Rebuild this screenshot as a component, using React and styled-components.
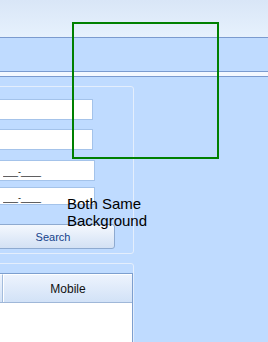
import React from "react";
import styled, { createGlobalStyle } from "styled-components";

const GlobalStyle = createGlobalStyle`
  html, body {
    margin: 0;
    padding: 0;
    background: #bfdbff;
    overflow: hidden;
  }
`;

const Page = styled.div`
  position: relative;
  width: 268px;
  height: 342px;
  overflow: hidden;
  background: #bfdbff;
  font-family: "Liberation Sans", Arial, sans-serif;
`;

const TopBar = styled.div`
  height: 37px;
  background: linear-gradient(#d9e6f7, #e6f1fd);
  border-bottom: 1px solid #7b9bcf;
`;

const Ribbon = styled.div`
  height: ${(p) => p.h}px;
  background: ${(p) => p.bg};
  border-bottom: 1px solid #7b9bcf;
`;

const Content = styled.div`
  display: flex;
  flex-direction: column;
  gap: 9px;
  width: 146px;
  margin: 9px 0 0 -12px;
`;

const Panel = styled.div`
  box-sizing: border-box;
  display: flex;
  flex-direction: column;
  align-items: flex-start;
  border: 1px solid #e4eefc;
  border-radius: 0 3px 3px 0;
  padding: ${(p) => p.pad};
  height: ${(p) => p.h}px;
`;

const Field = styled.input`
  box-sizing: border-box;
  width: ${(p) => p.w}px;
  height: ${(p) => p.h}px;
  margin: ${(p) => p.top}px 0 0 10px;
  padding: 3px 0 0 3px;
  border: 1px solid #a4c3ea;
  background: #fff;
  font-family: "Liberation Sans", Arial, sans-serif;
  font-size: 9px;
  color: #000;
  outline: none;
`;

const SearchButton = styled.button`
  box-sizing: border-box;
  width: 124px;
  height: 25px;
  margin: 19px 0 0 2px;
  border: 1px solid #8eaad0;
  border-radius: 3px;
  background: linear-gradient(#f4f8fe, #d3e1f4);
  color: #15428b;
  font-family: "Liberation Sans", Arial, sans-serif;
  font-size: 11px;
  padding: 0;
`;

const Grid = styled.div`
  box-sizing: border-box;
  width: 100%;
  flex: 1;
  border: 1px solid #7d9fcf;
  border-left: none;
  background: #fff;
`;

const HeaderRow = styled.div`
  display: flex;
  height: 28px;
  border-bottom: 1px solid #9fb7d8;
`;

const HeaderCell = styled.div`
  box-sizing: border-box;
  width: ${(p) => (p.w ? `${p.w}px` : "auto")};
  flex: ${(p) => (p.w ? "none" : 1)};
  display: flex;
  align-items: center;
  justify-content: center;
  border-right: ${(p) => (p.w ? "1px solid #a3bcdc" : "none")};
  border-top: 1px solid #fff;
  border-left: ${(p) => (p.w ? "none" : "1px solid #fff")};
  background: linear-gradient(#edf3fd, #d2e2f7);
  color: #111;
  font-size: 12px;
`;

const Note = styled.div`
  position: absolute;
  left: 67px;
  top: 195px;
  font-family: "Liberation Sans", Arial, sans-serif;
  font-size: 15px;
  line-height: 17px;
  color: #000;
`;

const Frame = styled.div`
  position: absolute;
  left: 72px;
  top: 22px;
  width: 147px;
  height: 137px;
  box-sizing: border-box;
  border: 2px solid #008000;
`;

export default function App() {
  return (
    <Page>
      <GlobalStyle />
      <TopBar />
      <Ribbon h={33} bg="#bfdbff" />
      <Ribbon h={4} bg="#f3f8ff" />
      <Content>
        <Panel h={168} pad="0 0 4px 0">
          <Field w={94} h={21} top={12} readOnly />
          <Field w={94} h={21} top={9} readOnly />
          <Field w={96} h={21} top={10} value="___-____" readOnly />
          <Field w={96} h={18} top={6} value="___-____" readOnly />
          <SearchButton>Search</SearchButton>
        </Panel>
        <Panel h={120} pad="9px 0 0 0">
          <Grid>
            <HeaderRow>
              <HeaderCell w={14} />
              <HeaderCell>Mobile</HeaderCell>
            </HeaderRow>
          </Grid>
        </Panel>
      </Content>
      <Frame />
      <Note>
        Both Same
        <br />
        Background
      </Note>
    </Page>
  );
}
